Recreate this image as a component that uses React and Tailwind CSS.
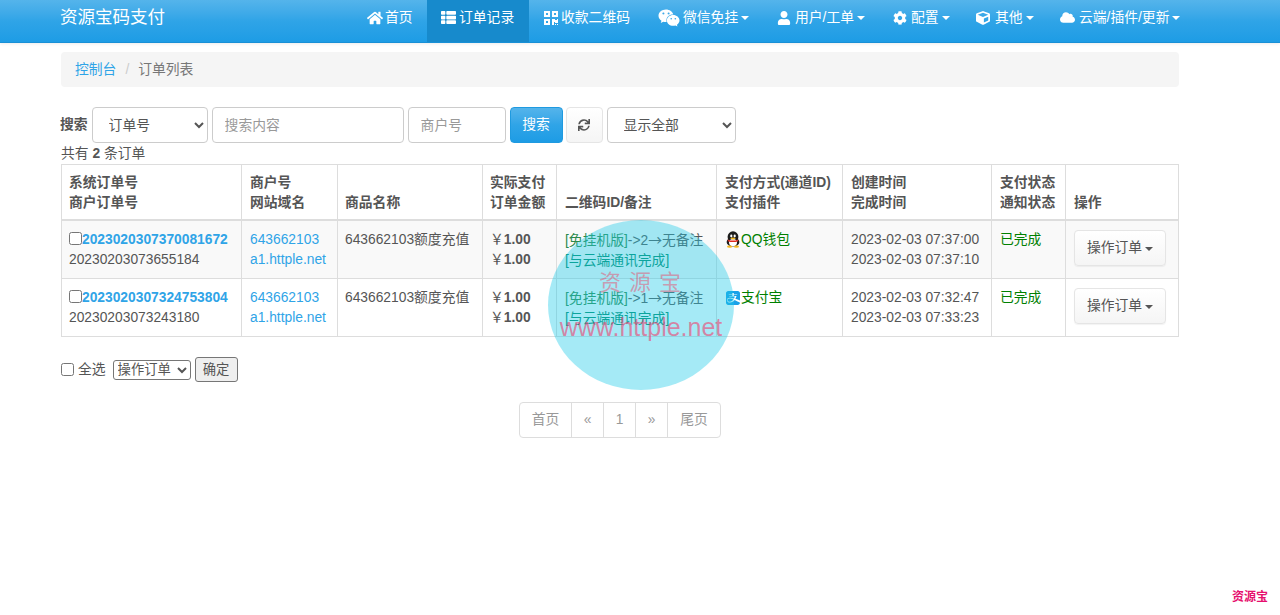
import { FaHome, FaThList, FaQrcode, FaWeixin, FaUser, FaCog, FaCube, FaCloud, FaSync, FaAlipay } from 'react-icons/fa';

const Caret = ({ color = 'border-t-white' }) => (
  <span className={`inline-block ml-[3px] w-0 h-0 align-middle border-t-4 border-x-4 border-x-transparent ${color}`} />
);

const QqIcon = () => (
  <svg width="16" height="17" viewBox="0 0 16 17" className="shrink-0">
    <ellipse cx="8" cy="6" rx="5.4" ry="5.8" fill="#1c1c1c" />
    <ellipse cx="8" cy="11" rx="6.4" ry="4.6" fill="#1c1c1c" />
    <ellipse cx="8" cy="11.6" rx="4" ry="3.6" fill="#fff" />
    <ellipse cx="6.3" cy="5" rx="1.1" ry="1.4" fill="#fff" />
    <ellipse cx="9.7" cy="5" rx="1.1" ry="1.4" fill="#fff" />
    <path d="M5 7.2 Q8 5.9 11 7.2 L8 8.8 Z" fill="#f5b81f" />
    <path d="M2.8 8.4 Q8 10.8 13.2 8.4 L13.2 10.2 Q8 12 2.8 10.2 Z" fill="#e02a20" />
    <ellipse cx="4.6" cy="15.6" rx="2.6" ry="1.2" fill="#f5b81f" />
    <ellipse cx="11.4" cy="15.6" rx="2.6" ry="1.2" fill="#f5b81f" />
  </svg>
);

const navItems = [
  { icon: FaHome, label: '首页', w: 'w-[74px]', iconClass: 'text-[16px] mr-[2px]' },
  { icon: FaThList, label: '订单记录', w: 'w-[102px]', iconClass: 'text-[15px] mr-[3px]', active: true },
  { icon: FaQrcode, label: '收款二维码', w: 'w-[115px]', iconClass: 'text-[16px] mr-[2px]' },
  { icon: FaWeixin, label: '微信免挂', w: 'w-[119px]', iconClass: 'text-[22px] mr-[3px]', caret: true },
  { icon: FaUser, label: '用户/工单', w: 'w-[116px]', iconClass: 'text-[14px] mr-[4px]', caret: true },
  { icon: FaCog, label: '配置', w: 'w-[83px]', iconClass: 'text-[14px] mr-[4px]', caret: true },
  { icon: FaCube, label: '其他', w: 'w-[84px]', iconClass: 'text-[14px] mr-[5px]', caret: true },
  { icon: FaCloud, label: '云端/插件/更新', w: 'w-[147px]', iconClass: 'text-[15px] mr-[4px]', caret: true },
];

const orders = [
  {
    id: '2023020307370081672',
    no: '20230203073655184',
    remark: '->2',
    pay: 'qq',
    created: '2023-02-03 07:37:00',
    done: '2023-02-03 07:37:10',
  },
  {
    id: '2023020307324753804',
    no: '20230203073243180',
    remark: '->1',
    pay: 'alipay',
    created: '2023-02-03 07:32:47',
    done: '2023-02-03 07:33:23',
  },
];

const th = 'border border-[#ddd] border-b-2 pt-2 pb-[7px] text-left align-bottom font-bold leading-[19.5px]';
const td = 'border border-[#ddd] pt-[9px] pb-2 align-top leading-[19.5px]';

export default function App() {
  return (
    <div className="relative h-[615px] overflow-hidden bg-white text-[13.8px] leading-5 text-[#555] font-['Liberation_Sans','Noto_Sans_CJK_SC',sans-serif]">
      <nav className="h-[43px] flex justify-between pl-[60px] pr-[87px] bg-gradient-to-b from-[#54b4eb] via-[#2fa4e7] to-[#1d9ce5] border-b border-[#1990d6] shadow-[0_1px_3px_rgba(0,0,0,0.08)]">
        <div className="text-[17.5px] leading-[34px] text-white">资源宝码支付</div>
        <div className="flex">
          {navItems.map((item) => {
            const Icon = item.icon;
            return (
              <div
                key={item.label}
                className={`${item.w} flex items-center pl-[14px] pb-[7px] text-white whitespace-nowrap ${item.active ? 'bg-[#178acc]' : ''}`}
              >
                <Icon className={`${item.iconClass} shrink-0`} />
                <span>{item.label}</span>
                {item.caret && <Caret />}
              </div>
            );
          })}
        </div>
      </nav>

      <main className="w-[1118px] ml-[61px]">
        <div className="mt-[9px] h-[35px] flex items-center px-[14px] rounded-[4px] bg-[#f5f5f5]">
          <a className="text-[#2fa4e7]">控制台</a>
          <span className="px-[9px] text-[#ccc]">/</span>
          <span className="text-[#777]">订单列表</span>
        </div>

        <form className="mt-5 -ml-px flex items-center h-[36px]">
          <span className="font-bold mr-1">搜索</span>
          <select className="w-[116px] h-[36px] px-3 mr-1 rounded-[4px] border border-[#ccc] bg-white">
            <option>订单号</option>
          </select>
          <input placeholder="搜索内容" className="w-[192px] h-[36px] px-3 mr-1 rounded-[4px] border border-[#ccc] placeholder:text-[#999]" />
          <input placeholder="商户号" className="w-[98px] h-[36px] px-3 mr-1 rounded-[4px] border border-[#ccc] placeholder:text-[#999]" />
          <button type="button" className="w-[53px] h-[36px] mr-[3px] rounded-[4px] border border-[#1f9ae0] bg-gradient-to-b from-[#54b4eb] via-[#2fa4e7] to-[#1d9ce5] text-white">搜索</button>
          <button type="button" className="w-[37px] h-[36px] mr-1 flex items-center justify-center rounded-[4px] border border-[#e5e5e5] bg-gradient-to-b from-white to-[#f5f5f5] text-[#555]">
            <FaSync className="text-[12px]" />
          </button>
          <select className="w-[129px] h-[36px] px-3 rounded-[4px] border border-[#ccc] bg-white">
            <option>显示全部</option>
          </select>
        </form>

        <div className="h-[21px] leading-[20px] pt-px">共有 <b>2</b> 条订单</div>

        <table className="w-[1117px] table-fixed border-collapse">
          <colgroup>
            <col className="w-[180px]" />
            <col className="w-[96px]" />
            <col className="w-[145px]" />
            <col className="w-[74px]" />
            <col className="w-[160px]" />
            <col className="w-[126px]" />
            <col className="w-[149px]" />
            <col className="w-[74px]" />
            <col className="w-[113px]" />
          </colgroup>
          <thead>
            <tr>
              <th className={`${th} px-[7px]`}>系统订单号<br />商户订单号</th>
              <th className={`${th} px-2`}>商户号<br />网站域名</th>
              <th className={`${th} px-[7px]`}>商品名称</th>
              <th className={`${th} px-[7px]`}>实际支付<br />订单金额</th>
              <th className={`${th} px-2`}>二维码ID/备注</th>
              <th className={`${th} px-2`}>支付方式(通道ID)<br />支付插件</th>
              <th className={`${th} px-2`}>创建时间<br />完成时间</th>
              <th className={`${th} px-2`}>支付状态<br />通知状态</th>
              <th className={`${th} px-2`}>操作</th>
            </tr>
          </thead>
          <tbody>
            {orders.map((o, i) => (
              <tr key={o.id} className={`h-[58px] ${i === 0 ? 'bg-[#f9f9f9]' : ''}`}>
                <td className={`${td} px-[7px] whitespace-nowrap`}>
                  <input type="checkbox" className="align-[-1px]" />
                  <b className="text-[#2fa4e7]">{o.id}</b>
                  <br />
                  {o.no}
                </td>
                <td className={`${td} px-2`}>
                  <a className="text-[#2fa4e7]">643662103<br />a1.httple.net</a>
                </td>
                <td className={`${td} px-[7px]`}>643662103额度充值</td>
                <td className={`${td} px-[7px] whitespace-nowrap`}>
                  ￥<b>1.00</b><br />￥<b>1.00</b>
                </td>
                <td className={`${td} px-2 whitespace-nowrap`}>
                  <span className="text-[#2c8a4c]">[免挂机版]</span>
                  <span>{o.remark}</span>
                  <span className="font-['Noto_Sans_CJK_SC',sans-serif]">→</span>
                  <span>无备注</span>
                  <br />
                  <span className="text-[#008a6a]">[与云端通讯完成]</span>
                </td>
                <td className={`${td} px-2`}>
                  <div className="flex items-center text-[#008000]">
                    {o.pay === 'qq' ? <QqIcon /> : <FaAlipay className="text-[16px] text-[#1aa1e8] shrink-0" />}
                    <span>{o.pay === 'qq' ? 'QQ钱包' : '支付宝'}</span>
                  </div>
                </td>
                <td className={`${td} px-2 whitespace-nowrap`}>{o.created}<br />{o.done}</td>
                <td className={`${td} px-2 text-[#008000]`}>已完成</td>
                <td className={`${td} px-2`}>
                  <button type="button" className="w-[92px] h-[36px] block rounded-[4px] border border-[#e5e5e5] bg-gradient-to-b from-white to-[#f5f5f5] shadow-[0_1px_1px_rgba(0,0,0,0.05)]">
                    操作订单<Caret color="border-t-[#555]" />
                  </button>
                </td>
              </tr>
            ))}
          </tbody>
        </table>

        <div className="mt-5 h-[25px] flex items-center">
          <input type="checkbox" className="mr-[4px]" />
          <span className="mr-[7px]">全选</span>
          <select className="w-[78px] h-[20px] mr-1 rounded-[3px] border border-[#767676] text-[13.3px] leading-none">
            <option>操作订单</option>
          </select>
          <button type="button" className="w-[43px] h-[25px] rounded-[3px] border border-[#767676] bg-[#efefef] text-[13.3px]">确定</button>
        </div>

        <div className="mt-5 flex justify-center text-[#999]">
          <div className="flex h-[36px] rounded-[4px] border border-[#ddd] divide-x divide-[#ddd] bg-white">
            <span className="w-[52px] flex items-center justify-center">首页</span>
            <span className="w-[32px] flex items-center justify-center">«</span>
            <span className="w-[32px] flex items-center justify-center">1</span>
            <span className="w-[32px] flex items-center justify-center">»</span>
            <span className="w-[52px] flex items-center justify-center">尾页</span>
          </div>
        </div>
      </main>

      <div className="absolute left-[548px] top-[220px] w-[186px] h-[170px] rounded-[50%] bg-[#1fcbe8]/40 overflow-hidden">
        <div className="absolute top-[51px] w-full pl-[6px] text-center text-[22px] leading-6 tracking-[8px] text-[#e8506e]/50">资源宝</div>
        <div className="absolute top-[93px] w-full text-center text-[25px] leading-7 whitespace-nowrap text-[#f0406e]/60">www.httple.net</div>
      </div>

      <div className="absolute right-[12px] top-[587px] text-[12px] font-bold text-[#e6106e]">资源宝</div>
    </div>
  );
}
